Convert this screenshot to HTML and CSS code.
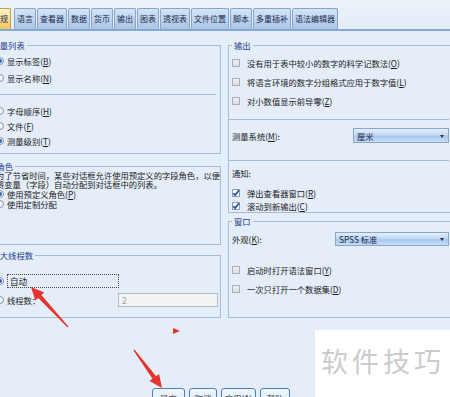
FILE: index.html
```html
<!DOCTYPE html>
<html lang="zh-CN">
<head>
<meta charset="UTF-8">
<title>选项</title>
<link rel="stylesheet" href="styles.css">
</head>
<body>

<!-- Tabs -->
<div class="tab-strip">
  <div class="tabs">
    <span class="tab active">常规</span>
    <span class="tab">语言</span>
    <span class="tab">查看器</span>
    <span class="tab">数据</span>
    <span class="tab">货币</span>
    <span class="tab">输出</span>
    <span class="tab">图表</span>
    <span class="tab">透视表</span>
    <span class="tab">文件位置</span>
    <span class="tab">脚本</span>
    <span class="tab">多重插补</span>
    <span class="tab">语法编辑器</span>
  </div>
</div>

<div class="panels">

  <!-- Left column -->
  <div class="col col-left">
    <fieldset class="group">
      <legend>变量列表</legend>
      <div class="inner">
        <div class="row h17 first-vars"><span class="radio on"></span>显示标签(<u>B</u>)</div>
        <div class="row h17"><span class="radio"></span>显示名称(<u>N</u>)</div>
        <div class="sep sep-left"></div>
        <div class="row h15 after-sep"><span class="radio"></span>字母顺序(<u>H</u>)</div>
        <div class="row h15"><span class="radio"></span>文件(<u>F</u>)</div>
        <div class="row h15 last-vars"><span class="radio on"></span>测量级别(<u>T</u>)</div>
      </div>
    </fieldset>

    <fieldset class="group group-roles">
      <legend class="legend-roles">角色</legend>
      <div class="inner">
        <p class="desc">为了节省时间，某些对话框允许使用预定义的字段角色，以便<br>将变量（字段）自动分配到对话框中的列表。</p>
        <div class="row h10"><span class="radio on"></span>使用预定义角色(<u>P</u>)</div>
        <div class="row h10 last-roles"><span class="radio"></span>使用定制分配</div>
      </div>
    </fieldset>

    <fieldset class="group group-threads">
      <legend>最大线程数</legend>
      <div class="inner">
        <div class="row h14 first-threads">
          <span class="radio on"></span>
          <span class="focus-label">自动</span>
        </div>
        <div class="row h14 last-threads">
          <span class="radio"></span>
          <span class="label">线程数：</span>
          <span class="num-input">2</span>
        </div>
      </div>
    </fieldset>
  </div>

  <!-- Right column -->
  <div class="col col-right">
    <fieldset class="group">
      <legend>输出</legend>
      <div class="inner inner-right">
        <div class="row h19 first-out"><span class="check"></span>没有用于表中较小的数字的科学记数法(<u>O</u>)</div>
        <div class="row h19"><span class="check"></span>将语言环境的数字分组格式应用于数字值(<u>L</u>)</div>
        <div class="row h19"><span class="check"></span>对小数值显示前导零(<u>Z</u>)</div>
        <div class="sep sep-right sep-a"></div>
        <div class="row h15 select-row measure">
          <span class="select-label label-measure">测量系统(<u>M</u>):</span>
          <span class="select select-measure">厘米<span class="caret"></span></span>
        </div>
        <div class="sep sep-right sep-b"></div>
        <div class="row h14 notify">通知:</div>
        <div class="row h13 first-notify">
          <span class="check on"><svg viewBox="0 0 8 8" width="8" height="8"><path d="M1.3 4.2 L3.1 6.2 L6.9 1.2" fill="none" stroke="#1d4ea6" stroke-width="1.7"/></svg></span>弹出查看器窗口(<u>R</u>)
        </div>
        <div class="row h13">
          <span class="check on"><svg viewBox="0 0 8 8" width="8" height="8"><path d="M1.3 4.2 L3.1 6.2 L6.9 1.2" fill="none" stroke="#1d4ea6" stroke-width="1.7"/></svg></span>滚动到新输出(<u>C</u>)
        </div>
      </div>
    </fieldset>

    <fieldset class="group group-window">
      <legend>窗口</legend>
      <div class="inner inner-right">
        <div class="row h14 select-row look">
          <span class="select-label label-look">外观(<u>K</u>):</span>
          <span class="select select-look">SPSS 标准<span class="caret"></span></span>
        </div>
        <div class="row h19 first-win"><span class="check"></span>启动时打开语法窗口(<u>Y</u>)</div>
        <div class="row h19 last-win"><span class="check"></span>一次只打开一个数据集(<u>D</u>)</div>
      </div>
    </fieldset>
  </div>

</div>

<!-- Dialog buttons -->
<div class="buttons">
  <span class="btn btn-ok">确定</span>
  <span class="btn btn-cancel">取消</span>
  <span class="btn btn-apply">应用(<u>A</u>)</span>
  <span class="btn btn-help">帮助</span>
</div>

<!-- Annotations drawn over the screenshot -->
<svg class="marks" viewBox="0 0 450 397" width="450" height="397">
  <polygon points="31,287 44.2,292.5 41.4,295 68.4,326.6 67.6,327.4 38.2,298 35.4,300.6" fill="#e4352c"/>
  <polygon points="162,388 159.1,373.9 156.1,376.2 134.5,349.6 133.5,350.4 152.5,378.8 149.5,381.1" fill="#e4352c"/>
  <polygon points="173,328 180,331 173,334" fill="#e4352c"/>
</svg>

<div class="watermark">软件技巧</div>

</body>
</html>
```

FILE: styles.css
```css
html, body {
  overflow: hidden;
}

body {
  margin: 0;
  width: 450px;
  height: 397px;
  position: relative;
  background: #e4edf8;
  font-family: "Noto Sans CJK SC", "Noto Sans", sans-serif;
  font-size: 8.3px;
  color: #1c1c1c;
}

u {
  text-decoration-thickness: 1px;
}


/* Tab strip */
.tab-strip {
  height: 29px;
  display: flex;
  align-items: flex-end;
  background: linear-gradient(#eef3fa, #e3ecf7);
  border-bottom: 2px solid #84a9d5;
}

.tabs {
  display: flex;
  gap: 1px;
  margin-left: -11px;
}

.tab {
  height: 20px;
  line-height: 20px;
  padding: 0 2px;
  font-size: 8px;
  color: #1b2b4a;
  border: 1px solid #86a6cc;
  border-bottom: none;
  border-radius: 2px 2px 0 0;
  background: linear-gradient(#d4e4f6, #a8c5e8);
}

.tab.active {
  margin-right: 2px;
  border-color: #c79d47;
  background: linear-gradient(#fff1c6, #f5c65d);
}


/* Panels */
.panels {
  display: flex;
  gap: 7px;
  margin-left: -14px;
  padding-top: 9px;
}

.col-left {
  width: 235px;
}

.col-right {
  width: 240px;
}

.group {
  margin: 0;
  padding: 0 2px 0 0;
  min-width: 0;
  border: 1px solid #a7bbd5;
}

.group legend {
  margin-left: 2.5px;
  padding: 0 2px;
  line-height: 10px;
  color: #22408a;
}

.col-right .group legend {
  margin-left: 3px;
}

.group .legend-roles {
  margin-left: 7.5px;
}

.group-roles {
  margin-top: 7px;
}

.group-threads {
  margin-top: 5px;
}

.group-window {
  margin-top: 3px;
}

.inner {
  padding-left: 9px;
}

.inner-right {
  padding-left: 3px;
}


/* Rows */
.row {
  display: flex;
  align-items: center;
  white-space: nowrap;
}

.h10 { height: 10px; }
.h13 { height: 13px; }
.h14 { height: 14px; }
.h15 { height: 15px; }
.h17 { height: 17px; }
.h19 { height: 19px; }

.first-vars { margin-top: 2px; }
.after-sep { margin-top: 8px; }
.last-vars { margin-bottom: 5px; }
.last-roles { margin-bottom: 35px; }
.first-threads { margin-top: 14px; }
.last-threads { margin-top: 5px; margin-bottom: 10px; }

.first-out { margin-top: 3px; }
.measure { margin-top: 8px; }
.notify { margin-top: 5px; }
.first-notify { margin-top: 6px; }
.look { margin-top: 6px; }
.first-win { margin-top: 14px; }
.last-win { margin-bottom: 19px; }

.desc {
  margin: 0;
  line-height: 9px;
  white-space: nowrap;
}

.sep {
  height: 1px;
  background: #a7bbd5;
}

.sep-left {
  margin: 8px 2px 0 -9px;
}

.sep-right {
  margin-left: -3px;
}

.sep-a { margin-top: 9px; }
.sep-b { margin-top: 17px; }


/* Radio and check boxes */
.radio {
  flex: none;
  width: 6px;
  height: 6px;
  margin-right: 3px;
  border: 1px solid #8797ae;
  border-radius: 50%;
  background: radial-gradient(circle, #ffffff, #dfe6ef);
  display: flex;
  align-items: center;
  justify-content: center;
}

.radio.on::after {
  content: "";
  width: 4px;
  height: 4px;
  border-radius: 50%;
  background: #2f63b3;
}

.check {
  flex: none;
  width: 6px;
  height: 6px;
  margin-right: 7px;
  border: 1px solid #a5b1c2;
  background: linear-gradient(#f1f1f1, #dcdcdc);
  position: relative;
}

.check.on {
  background: #ffffff;
  border-color: #8d9db4;
}

.check svg {
  position: absolute;
  left: -1px;
  top: -1px;
}


/* Thread controls */
.focus-label {
  width: 108px;
  height: 12px;
  padding-left: 2px;
  display: flex;
  align-items: center;
  font-size: 8.6px;
  border: 1px dotted #4a4a4a;
}

.label {
  flex: 1;
}

.num-input {
  width: 95px;
  height: 12px;
  padding-left: 3px;
  line-height: 12px;
  color: #9a9a9a;
  background: #f1f2f4;
  border: 1px solid #b4bcc8;
}


/* Drop-downs */
.select-label {
  flex: none;
}

.label-measure { width: 121px; }
.label-look { width: 103px; }

.select {
  height: 13px;
  padding-left: 3px;
  display: flex;
  align-items: center;
  position: relative;
  color: #1a2a48;
  border: 1px solid #86a7cf;
  background: linear-gradient(#e3eefa, #c2d9f3 45%, #a9c8ee 55%, #c6dcf5);
}

.select-measure { width: 91px; height: 13px; }
.select-look { width: 109px; height: 12px; }

.caret {
  position: absolute;
  right: 4px;
  top: 50%;
  margin-top: -1px;
  border-left: 2.5px solid transparent;
  border-right: 2.5px solid transparent;
  border-top: 3px solid #333;
}


/* Buttons */
.buttons {
  display: flex;
  gap: 4px;
  margin: 70px 0 0 152px;
}

.btn {
  height: 20px;
  line-height: 18px;
  text-align: center;
  border: 1px solid #4b7fb9;
  border-radius: 3px;
  background: linear-gradient(#f1f7fe, #cfe2f7);
}

.btn-ok { width: 31px; }
.btn-cancel { width: 26px; }
.btn-apply { width: 33px; }
.btn-help { width: 28px; }


/* Overlays */
.marks {
  position: absolute;
  left: 0;
  top: 0;
  pointer-events: none;
}

.watermark {
  position: absolute;
  left: 315px;
  top: 330px;
  width: 135px;
  height: 67px;
  padding: 14px 0 0 6px;
  box-sizing: border-box;
  background: #ffffff;
  font-size: 27px;
  line-height: 34px;
  letter-spacing: 4px;
  color: #cbcbcb;
  white-space: nowrap;
}
```
